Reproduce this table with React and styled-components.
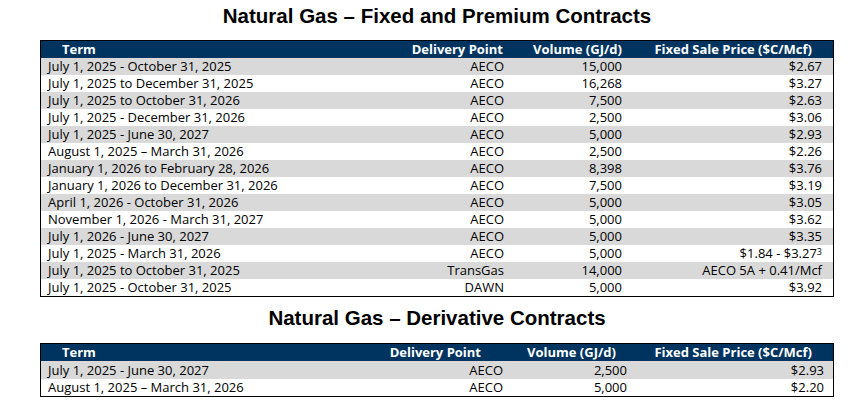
import styled, { createGlobalStyle } from "styled-components";

const GlobalStyle = createGlobalStyle`
  html, body {
    margin: 0;
    padding: 0;
    background: #ffffff;
  }
`;

const Page = styled.div`
  width: 852px;
  display: flex;
  flex-direction: column;
  padding-left: 40px;
  box-sizing: border-box;
`;

const Section = styled.div`
  width: 794px;
  display: flex;
  flex-direction: column;
`;

const Title = styled.h2`
  margin: 0;
  padding-top: ${(p) => p.$top}px;
  padding-bottom: ${(p) => p.$bottom}px;
  font-family: "Liberation Sans", Arial, sans-serif;
  font-weight: bold;
  font-size: 20.5px;
  line-height: 24px;
  color: #000000;
  text-align: center;
`;

const Table = styled.div`
  border: 1px solid #000000;
  display: flex;
  flex-direction: column;
  font-family: "Open Sans", sans-serif;
  font-size: 13px;
  color: #000000;
`;

const Row = styled.div`
  display: grid;
  grid-template-columns: ${(p) => p.$cols};
  height: ${(p) => p.$h}px;
  line-height: ${(p) => p.$h}px;
  background: ${(p) => (p.$grey ? "#d9d9d9" : "#ffffff")};
  white-space: nowrap;
`;

const HeadRow = styled(Row)`
  background: #003460;
  color: #ffffff;
  font-weight: bold;
`;

const Cell = styled.div`
  text-align: ${(p) => (p.$left ? "left" : "right")};
  padding-left: ${(p) => p.$pl || 0}px;
  padding-right: ${(p) => p.$pr || 0}px;
`;

const Sup = styled.span`
  display: inline-block;
  font-size: 9px;
  line-height: 9px;
  vertical-align: 3px;
`;

const fixedRows = [
  ["July 1, 2025 - October 31, 2025", "AECO", "15,000", "$2.67"],
  ["July 1, 2025 to December 31, 2025", "AECO", "16,268", "$3.27"],
  ["July 1, 2025 to October 31, 2026", "AECO", "7,500", "$2.63"],
  ["July 1, 2025 - December 31, 2026", "AECO", "2,500", "$3.06"],
  ["July 1, 2025 - June 30, 2027", "AECO", "5,000", "$2.93"],
  ["August 1, 2025 – March 31, 2026", "AECO", "2,500", "$2.26"],
  ["January 1, 2026 to February 28, 2026", "AECO", "8,398", "$3.76"],
  ["January 1, 2026 to December 31, 2026", "AECO", "7,500", "$3.19"],
  ["April 1, 2026 - October 31, 2026", "AECO", "5,000", "$3.05"],
  ["November 1, 2026 - March 31, 2027", "AECO", "5,000", "$3.62"],
  ["July 1, 2026 - June 30, 2027", "AECO", "5,000", "$3.35"],
  ["July 1, 2025 - March 31, 2026", "AECO", "5,000", "sup"],
  ["July 1, 2025 to October 31, 2025", "TransGas", "14,000", "AECO 5A + 0.41/Mcf"],
  ["July 1, 2025 - October 31, 2025", "DAWN", "5,000", "$3.92"],
];

const derivRows = [
  ["July 1, 2025 - June 30, 2027", "AECO", "2,500", "$2.93"],
  ["August 1, 2025 – March 31, 2026", "AECO", "5,000", "$2.20"],
];

function ContractTable({ cols, head, rows, heights }) {
  return (
    <Table>
      <HeadRow $cols={cols} $h={17}>
        <Cell $left $pl={21}>Term</Cell>
        <Cell $pr={head[0]}>Delivery Point</Cell>
        <Cell $pr={head[1]}>Volume (GJ/d)</Cell>
        <Cell $pr={head[2]}>Fixed Sale Price ($C/Mcf)</Cell>
        <div />
      </HeadRow>
      {rows.map((r, i) => (
        <Row key={i} $cols={cols} $h={heights[i] || 17} $grey={i % 2 === 0}>
          <Cell $left $pl={7}>{r[0]}</Cell>
          <Cell>{r[1]}</Cell>
          <Cell>{r[2]}</Cell>
          <Cell>
            {r[3] === "sup" ? (
              <>
                $1.84 - $3.27<Sup>3</Sup>
              </>
            ) : (
              r[3]
            )}
          </Cell>
          <div />
        </Row>
      ))}
    </Table>
  );
}

export default function App() {
  return (
    <>
      <GlobalStyle />
      <Page>
        <Section>
          <Title $top={4} $bottom={12}>
            Natural Gas – Fixed and Premium Contracts
          </Title>
          <ContractTable
            cols="340px 123px 118px 200px 11px"
            head={[1, 0, 10]}
            rows={fixedRows}
            heights={[]}
          />
          <Title $top={9} $bottom={13}>
            Natural Gas – Derivative Contracts
          </Title>
          <ContractTable
            cols="340px 122px 124px 197px 9px"
            head={[22, 11, 12]}
            rows={derivRows}
            heights={[18, 17]}
          />
        </Section>
      </Page>
    </>
  );
}
